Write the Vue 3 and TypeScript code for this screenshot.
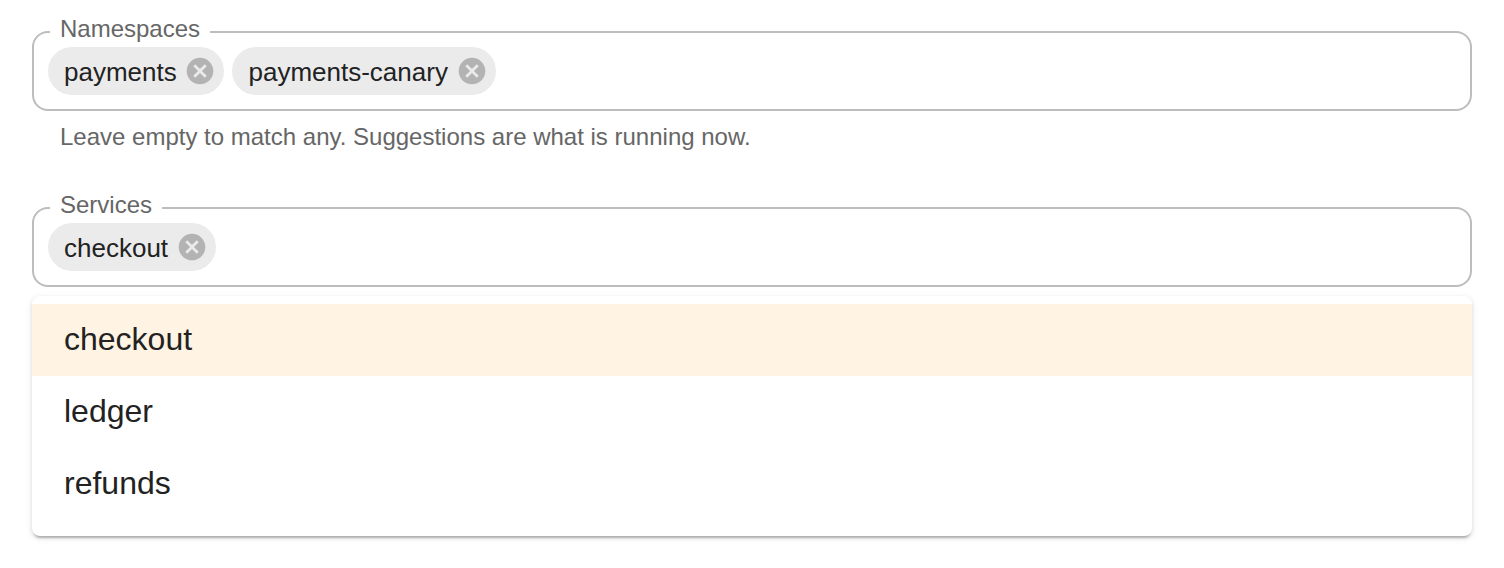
<script setup lang="ts">
interface Field {
  label: string;
  chips: string[];
  hint?: string;
}

const namespaces: Field = {
  label: "Namespaces",
  chips: ["payments", "payments-canary"],
  hint: "Leave empty to match any. Suggestions are what is running now.",
};
const services: Field = { label: "Services", chips: ["checkout"] };
const options = ["checkout", "ledger", "refunds"];
const selected = "checkout";
const cancelPath =
  "M12 2C6.47 2 2 6.47 2 12s4.47 10 10 10 10-4.47 10-10S17.53 2 12 2zm5 13.59L15.59 17 12 13.41 8.41 17 7 15.59 10.59 12 7 8.41 8.41 7 12 10.59 15.59 7 17 8.41 13.41 12 17 15.59z";
</script>

<template>
  <main class="page">
    <section class="field">
      <span class="label">{{ namespaces.label }}</span>
      <div class="box">
        <span v-for="chip in namespaces.chips" :key="chip" class="chip">
          <span class="chip-text">{{ chip }}</span>
          <svg class="del" viewBox="0 0 24 24"><path :d="cancelPath" /></svg>
        </span>
      </div>
      <p class="hint">{{ namespaces.hint }}</p>
    </section>

    <section class="field services">
      <span class="label">{{ services.label }}</span>
      <div class="box">
        <span v-for="chip in services.chips" :key="chip" class="chip">
          <span class="chip-text">{{ chip }}</span>
          <svg class="del" viewBox="0 0 24 24"><path :d="cancelPath" /></svg>
        </span>
      </div>
      <ul class="menu">
        <li v-for="o in options" :key="o" class="option" :class="{ active: o === selected }">{{ o }}</li>
      </ul>
    </section>
  </main>
</template>

<style>
html,
body {
  margin: 0;
  background: #fff;
}
</style>

<style scoped>
.page {
  box-sizing: border-box;
  height: 568px;
  padding: 31px 32px 0;
  font-family: "Liberation Sans", Arial, sans-serif;
  color: #222;
  overflow: hidden;
}
.field {
  position: relative;
}
.services {
  margin-top: 50px;
}
.label {
  position: absolute;
  left: 18px;
  top: -16px;
  padding: 0 10px;
  background: #fff;
  font-size: 24px;
  line-height: 28px;
  color: #666;
}
.box {
  box-sizing: border-box;
  height: 80px;
  padding: 14px;
  display: flex;
  align-items: flex-start;
  gap: 8px;
  border: 2px solid #bdbdbd;
  border-radius: 16px;
  background: #fff;
}
.chip {
  display: inline-flex;
  align-items: center;
  height: 48px;
  padding-left: 16px;
  border-radius: 24px;
  background: #ebebeb;
  font-size: 26px;
  white-space: nowrap;
}
.chip-text {
  padding-top: 2px;
}
.del {
  width: 32px;
  height: 32px;
  margin: 0 8px 0 7.75px;
  fill: #b3b3b3;
  flex: none;
}
.hint {
  margin: 6px 0 0 28px;
  font-size: 24px;
  line-height: 40px;
  color: #666;
}
.menu {
  list-style: none;
  margin: 9px 0 0;
  padding: 8px 0 16px;
  background: #fff;
  border-radius: 8px;
  box-shadow:
    0 4px 2px -2px rgba(0, 0, 0, 0.2),
    0 2px 4px 0 rgba(0, 0, 0, 0.14),
    0 2px 10px 0 rgba(0, 0, 0, 0.05);
}
.option {
  box-sizing: border-box;
  height: 72px;
  padding: 0 32px 2px;
  display: flex;
  align-items: center;
  font-size: 32px;
}
.active {
  background: #fff3e3;
}
</style>
